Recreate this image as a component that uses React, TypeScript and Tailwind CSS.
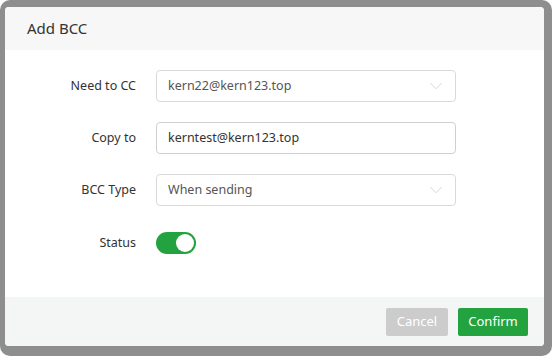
import { ChevronDown } from "lucide-react";

const fields = [
  { label: "Need to CC", value: "kern22@kern123.top", kind: "select" },
  { label: "Copy to", value: "kerntest@kern123.top", kind: "input" },
  { label: "BCC Type", value: "When sending", kind: "select" },
];

export default function App() {
  return (
    <div className="w-[552px] h-[356px] bg-white font-['Noto_Sans',sans-serif]">
      <div className="w-full h-full bg-[#8e8e8e] rounded-[10px] pt-[7px] pl-[5px] pr-[8px] pb-[10px]">
        <div className="w-full h-full bg-white rounded-[4px] overflow-hidden flex flex-col">
          <div className="h-[43px] shrink-0 bg-[#f7f7f7] flex items-center px-[22px]">
            <h1 className="text-[15px] text-[#333]">Add BCC</h1>
          </div>

          <div className="flex-1 flex flex-col pt-5 gap-5">
            {fields.map((f) => (
              <div key={f.label} className="flex items-center h-[32px]">
                <span className="w-[131px] text-right text-[12.5px] text-[#333]">{f.label}</span>
                <div
                  className={`ml-[20px] w-[300px] h-[32px] border rounded-[4px] flex items-center justify-between pl-[11px] pr-[8px] text-[12.5px] ${
                    f.kind === "select" ? "border-[#d9d9d9] text-[#555]" : "border-[#cfcfcf] text-[#333]"
                  }`}
                >
                  <span>{f.value}</span>
                  {f.kind === "select" && <ChevronDown className="w-[22px] h-[22px] text-[#c8c8c8]" strokeWidth={0.8} />}
                </div>
              </div>
            ))}

            <div className="flex items-center h-[22px] mt-[6px]">
              <span className="w-[131px] text-right text-[12.5px] text-[#333]">Status</span>
              <div className="ml-[20px] w-[40px] h-[22px] rounded-full bg-[#22a33f] flex items-center justify-end pr-[2px]">
                <div className="w-[18px] h-[18px] rounded-full bg-white" />
              </div>
            </div>
          </div>

          <div className="h-[49px] shrink-0 bg-[#f4f5f5] flex items-center justify-end gap-[10px] pr-[16px]">
            <button className="w-[62px] h-[28px] rounded-[2px] bg-[#cccccc] text-white text-[13px]">Cancel</button>
            <button className="w-[70px] h-[28px] rounded-[2px] bg-[#22a33f] text-white text-[13px]">Confirm</button>
          </div>
        </div>
      </div>
    </div>
  );
}
